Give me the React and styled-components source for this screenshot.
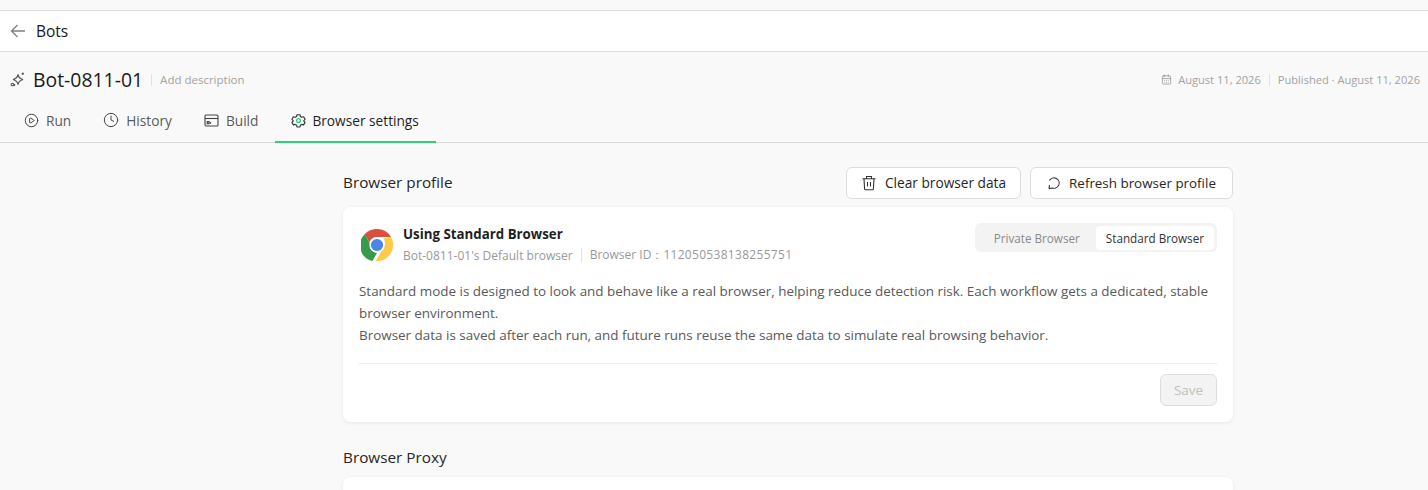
import React from "react";
import styled, { createGlobalStyle } from "styled-components";
import { CalendarDays, CirclePlay, Clock } from "lucide-react";

const Global = createGlobalStyle`
  html, body { margin: 0; padding: 0; background: #f9f9f9; height: 490px; overflow: hidden; }
  * { box-sizing: border-box; }
  body { font-family: "Open Sans", "Noto Sans", sans-serif; color: #1c1c1c; }
`;

const Page = styled.div`
  width: 1428px;
  height: 490px;
  overflow: hidden;
  background: #f9f9f9;
`;
const TopStrip = styled.div`
  height: 11px;
  border-bottom: 1px solid #dcdcdc;
`;
const BackBar = styled.header`
  height: 41px;
  background: #fff;
  border-bottom: 1px solid #dcdcdc;
  display: flex;
  align-items: center;
  gap: 10px;
  padding: 0 10px;
  font-size: 15.5px;
  color: #1a1a1a;
  svg { color: #7f7f7f; }
`;
const TitleRow = styled.div`
  height: 55px;
  display: flex;
  align-items: center;
  padding: 0 8px 0 10px;
`;
const BotName = styled.h1`
  margin: 0 0 0 8px;
  font-size: 19.4px;
  font-weight: 500;
  color: #1a1a1a;
`;
const VDivider = styled.span`
  width: 1px;
  height: ${p => p.$h || 12}px;
  background: #e2e2e2;
  margin: 0 ${p => p.$m || 8}px;
`;
const Desc = styled.span`
  font-size: 11.5px;
  color: #a3a3a3;
`;
const Meta = styled.div`
  margin-left: auto;
  display: flex;
  align-items: center;
  font-size: 11.1px;
  color: #a3a3a3;
  svg { margin-right: 6px; color: #8c8c8c; }
`;
const Tabs = styled.nav`
  height: 36px;
  display: flex;
  padding-left: 8px;
  border-bottom: 1px solid #d9d9d9;
`;
const Tab = styled.div`
  height: 36px;
  display: flex;
  align-items: center;
  gap: ${p => p.$active ? 6 : 7}px;
  padding: 0 ${p => p.$active ? 17 : 16}px 8px 16px;
  margin-left: ${p => p.$active ? 1 : 0}px;
  font-size: 13.7px;
  color: ${p => p.$active ? "#1f1f1f" : "#595959"};
  border-bottom: 2px solid ${p => p.$active ? "#2fcf74" : "transparent"};
  svg { color: #444; }
`;
const Content = styled.main`
  width: 890px;
  margin: 23px 0 0 343px;
`;
const SectionHead = styled.div`
  height: 33px;
  display: flex;
  align-items: center;
  justify-content: space-between;
`;
const SectionTitle = styled.h2`
  margin: 0;
  padding-bottom: 2px;
  font-size: 15.3px;
  font-weight: 400;
  color: #262626;
`;
const Actions = styled.div`
  display: flex;
  gap: 9px;
`;
const ActionButton = styled.button`
  height: 32px;
  width: ${p => p.$w}px;
  display: flex;
  align-items: center;
  justify-content: center;
  gap: 8px;
  background: #fff;
  border: 1px solid #dcdcdc;
  border-radius: 6px;
  font: inherit;
  font-size: ${p => p.$fs}px;
  color: #262626;
  padding: 0;
`;
const Card = styled.section`
  margin-top: 8px;
  background: #fff;
  border-radius: 8px;
  box-shadow: 0 1px 4px rgba(0,0,0,.07);
  padding: 16px 16px 0;
  height: ${p => p.$h}px;
`;
const CardHead = styled.div`
  display: flex;
  justify-content: space-between;
  align-items: flex-start;
`;
const Identity = styled.div`
  display: flex;
  align-items: center;
  gap: 10px;
  padding: 2px 0 0 2px;
`;
const IdentityText = styled.div`
  display: flex;
  flex-direction: column;
  gap: 3px;
`;
const CardTitle = styled.div`
  font-size: 13.3px;
  font-weight: 700;
  color: #1f1f1f;
`;
const CardMeta = styled.div`
  display: flex;
  align-items: center;
  font-size: 12px;
  color: #999;
`;
const IdNumber = styled.span`
  letter-spacing: 0.3px;
`;
const Segmented = styled.div`
  display: flex;
  align-items: center;
  height: 29px;
  padding: 3px;
  background: #f3f3f3;
  border-radius: 6px;
`;
const Segment = styled.div`
  height: 24px;
  display: flex;
  align-items: center;
  padding: 0 ${p => p.$active ? 10 : 16}px;
  border-radius: 4px;
  font-size: 11.7px;
  color: ${p => p.$active ? "#333" : "#8a8a8a"};
  background: ${p => p.$active ? "#fff" : "transparent"};
`;
const Body = styled.p`
  margin: 16px 0 0;
  font-size: 13.45px;
  line-height: 22px;
  color: #595959;
`;
const Footer = styled.div`
  margin-top: 17px;
  padding-top: 10px;
  border-top: 1px solid #ececec;
  display: flex;
  justify-content: flex-end;
`;
const SaveButton = styled.button`
  width: 57px;
  height: 32px;
  background: #f3f3f3;
  border: 1px solid #dedede;
  border-radius: 6px;
  font: inherit;
  font-size: 13.5px;
  color: #c0c0c0;
  padding: 0;
`;
const ProxyTitle = styled(SectionTitle)`
  margin-top: 25px;
  line-height: 20px;
`;

const BackIcon = () => (
  <svg width="16" height="16" viewBox="0 0 16 16" fill="none" stroke="currentColor" strokeWidth="1.3">
    <path d="M15 8H1.500M7.500 2 1.500 8l6 6" />
  </svg>
);
const SparkIcon = () => (
  <svg width="15" height="15" viewBox="0 0 15 15" fill="none" stroke="#555" strokeWidth="1.1">
    <path d="M8 2.300C8.500 5.300 9.700 6.700 13 7.500 9.700 8.300 8.500 9.700 8 12.700 7.500 9.700 6.300 8.300 3 7.500 6.300 6.700 7.500 5.300 8 2.300z" />
    <path d="M12.800 .6v2.400M11.600 1.800h2.400" />
    <circle cx="2.400" cy="12.500" r="1.300" />
    <path d="M4.600 13.900v-2" />
  </svg>
);
const BuildIcon = () => (
  <svg width="15" height="15" viewBox="0 0 15 15" fill="none" stroke="#444" strokeWidth="1.1">
    <rect x="1" y="2" width="13" height="11" rx="1" />
    <path d="M1 5.500h13" />
    <path d="M3.200 8.500h1.800v2.200H3.200zM6.500 9v1.700" strokeWidth="1.200" />
  </svg>
);
const GearIcon = () => (
  <svg width="15" height="15" viewBox="0 0 24 24" fill="none" stroke="#333" strokeWidth="1.8" strokeLinejoin="round">
    <path d="M9.600 2.800h4.800l.7 2.800 2.300 1.300 2.800-.8 2.300 4-2 2v.9l2 2-2.300 4-2.800-.8-2.300 1.300-.7 2.800H9.600l-.7-2.800-2.300-1.300-2.800.8-2.300-4 2-2v-.9l-2-2 2.300-4 2.800.8 2.300-1.300z" />
    <circle cx="12" cy="12" r="3" stroke="#2fcf74" strokeWidth="2.200" />
  </svg>
);
const TrashIcon = () => (
  <svg width="16" height="16" viewBox="0 0 16 16" fill="none" stroke="#333" strokeWidth="1.100">
    <path d="M1.500 3.800h13M5.500 3.800V1.500h5v2.300" />
    <path d="M3 3.800l.6 10.200a.8.8 0 0 0 .8.700h7.200a.8.800 0 0 0 .8-.7L13 3.800" />
    <path d="M6.500 7v4.500M9.500 7v4.500" />
  </svg>
);
const RefreshIcon = () => (
  <svg width="14" height="14" viewBox="0 0 14 14" fill="none" stroke="#333" strokeWidth="1.100">
    <path d="M2.400 4.600A5.200 5.200 0 1 1 5.200 12L2 12.600" />
    <path d="M2 12.600l.5-3.400" />
  </svg>
);
const ChromeIcon = () => (
  <svg width="32" height="32" viewBox="1 1 46 46">
    <circle cx="24" cy="24" r="23" fill="#fff" />
    <path d="M24 1a23 23 0 0 1 20 11.500H24a11.500 11.500 0 0 0-10.900 7.900L6.200 8.500A23 23 0 0 1 24 1z" fill="#d9503f" />
    <path d="M6.200 8.500l9.900 17.200A9 9 0 0 0 24 35.500l-6.600 11.500A23 23 0 0 1 6.200 8.500z" fill="#389a4c" />
    <path d="M44 12.500A23 23 0 0 1 22 47l10-17.300A11.500 11.500 0 0 0 33 14.500z" fill="#fbcb4c" />
    <circle cx="24" cy="24" r="11" fill="#fff" />
    <circle cx="24" cy="24" r="8.800" fill="#4a86e8" />
  </svg>
);

export default function App() {
  return (
    <Page>
      <Global />
      <TopStrip />
      <BackBar>
        <BackIcon />
        <span>Bots</span>
      </BackBar>
      <TitleRow>
        <SparkIcon />
        <BotName>Bot-0811-01</BotName>
        <VDivider />
        <Desc>Add description</Desc>
        <Meta>
          <CalendarDays size={11} strokeWidth={1.5} />
          <span>August 11, 2026</span>
          <VDivider />
          <span>Published · August 11, 2026</span>
        </Meta>
      </TitleRow>
      <Tabs>
        <Tab><CirclePlay size={15} strokeWidth={1.6} />Run</Tab>
        <Tab><Clock size={16} strokeWidth={1.5} />History</Tab>
        <Tab><BuildIcon />Build</Tab>
        <Tab $active><GearIcon />Browser settings</Tab>
      </Tabs>
      <Content>
        <SectionHead>
          <SectionTitle>Browser profile</SectionTitle>
          <Actions>
            <ActionButton $w={175} $fs={13.7}><TrashIcon />Clear browser data</ActionButton>
            <ActionButton $w={203} $fs={13.4}><RefreshIcon />Refresh browser profile</ActionButton>
          </Actions>
        </SectionHead>
        <Card $h={215}>
          <CardHead>
            <Identity>
              <ChromeIcon />
              <IdentityText>
                <CardTitle>Using Standard Browser</CardTitle>
                <CardMeta>
                  <span>Bot-0811-01's Default browser</span>
                  <VDivider $h={14} />
                  <span>Browser ID：<IdNumber>112050538138255751</IdNumber></span>
                </CardMeta>
              </IdentityText>
            </Identity>
            <Segmented>
              <Segment>Private Browser</Segment>
              <Segment $active>Standard Browser</Segment>
            </Segmented>
          </CardHead>
          <Body>
            Standard mode is designed to look and behave like a real browser, helping reduce detection risk. Each workflow gets a dedicated, stable browser environment.<br />
            Browser data is saved after each run, and future runs reuse the same data to simulate real browsing behavior.
          </Body>
          <Footer>
            <SaveButton disabled>Save</SaveButton>
          </Footer>
        </Card>
        <ProxyTitle>Browser Proxy</ProxyTitle>
        <Card $h={60} />
      </Content>
    </Page>
  );
}
